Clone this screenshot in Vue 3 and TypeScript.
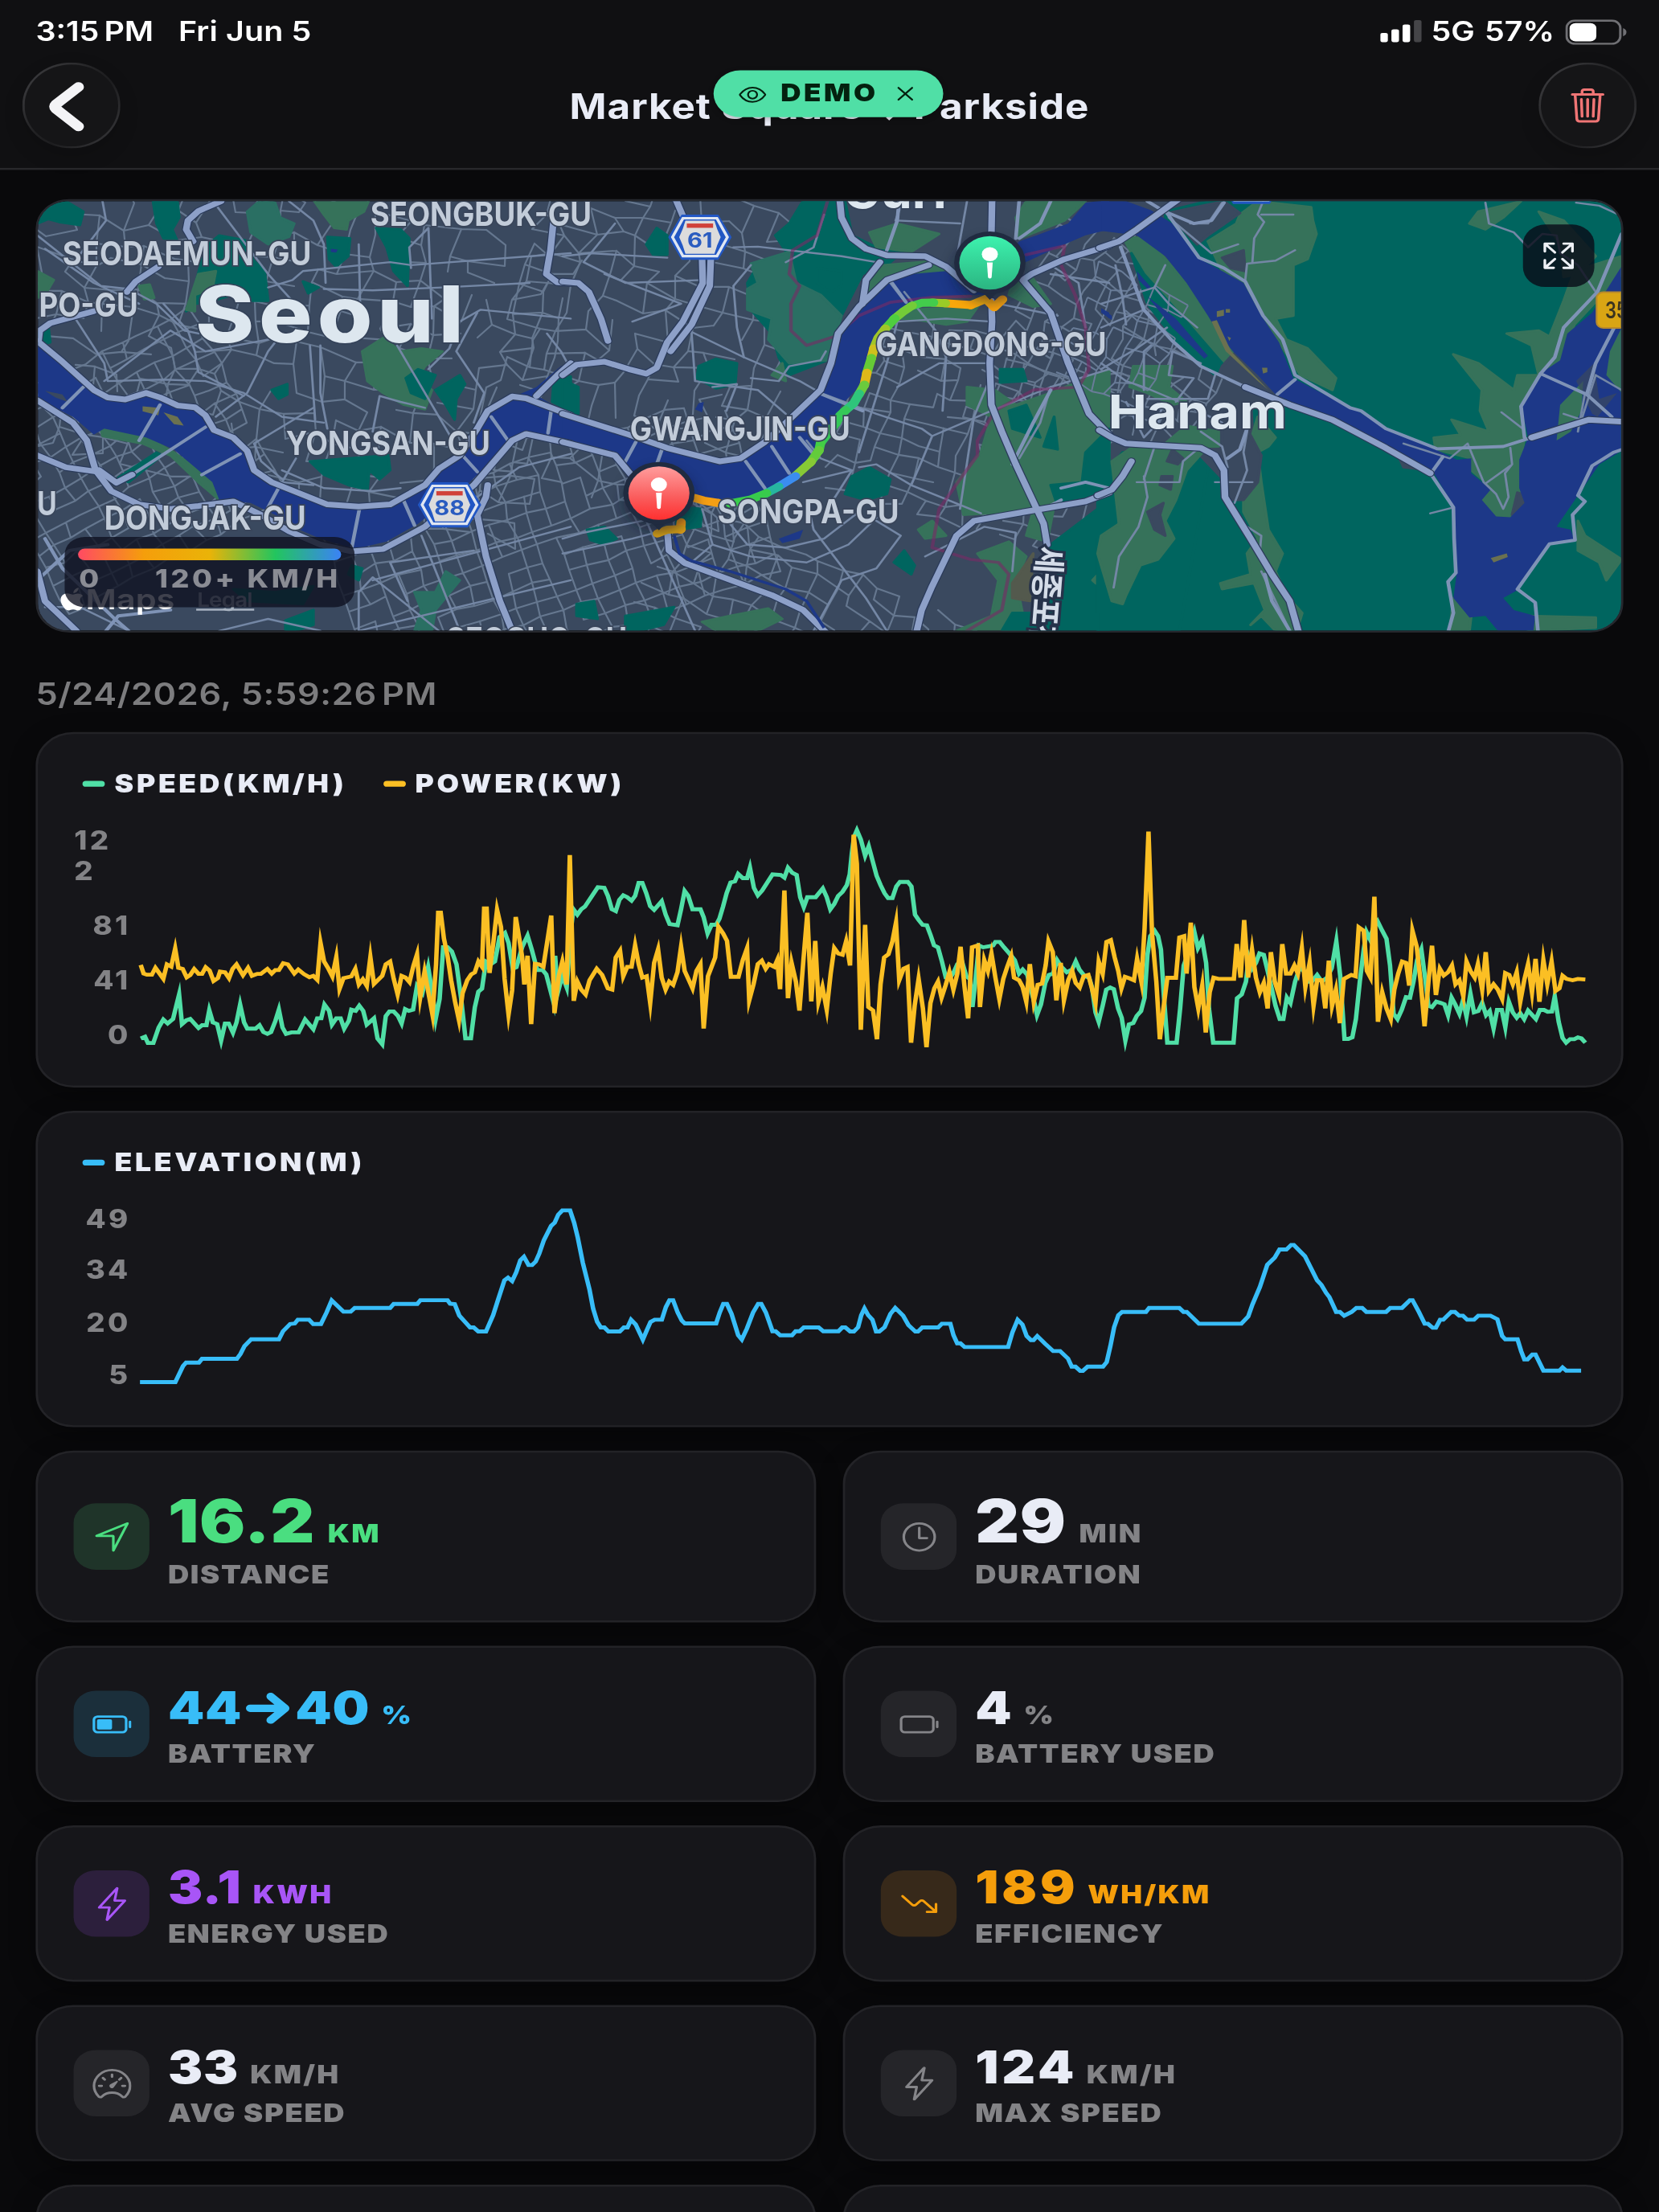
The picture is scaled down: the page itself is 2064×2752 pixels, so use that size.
<script setup lang="ts">
interface Chunk { x: number; y: number; kx: number; ky: number; pts: string }
interface Tile { m: string; land: [string, string][]; water: string[]; minor: string[]; mid: string[]; major: string[]; border: string[] }
interface Stat { icon: string; value: string; value2?: string; unit: string; label: string; tone: string; big?: boolean; ones?: boolean }

/* Horizontal and vertical pixels per layout point */
const SX = 2064 / 744
const SY = 2752 / 1133

const toPoints = (chunks: Chunk[]): string =>
  chunks
    .flatMap((c) =>
      c.pts.trim().split(/[\s;]+/).map((p) => {
        const [a, b] = p.split(',').map(Number)
        return `${((c.x + a / c.kx) / SX).toFixed(2)},${((c.y + b / c.ky) / SY).toFixed(2)}`
      }),
    )
    .join(' ')

const A = { x: 30, y: 820, kx: 2.24, ky: 2.8 }
const B = { x: 700, y: 900, kx: 2.24, ky: 3 }
const C = { x: 1370, y: 900, kx: 2.2594, ky: 3 }
const D = { x: 30, y: 1370, kx: 1.568, ky: 3 }
const E = { x: 1030, y: 1370, kx: 1.5164, ky: 3 }

const speed = toPoints([
  { ...A, pts: '325,1318;337,1312;345,1334;360,1334;375,1280;388,1252;400,1266;415,1250;424,1205;432,1165;440,1268;452,1255;463,1250;486,1282;496,1272;508,1272;516,1220;526,1262;538,1268;549,1325;560,1266;570,1266;582,1298;592,1262;602,1200;613,1262;622,1284;645,1284;656,1272;667,1296;678,1302;688,1296;700,1258;710,1218;720,1280;730,1302;745,1297;765,1297;783,1252;806,1286;817,1248;828,1248;837,1200;850,1222;858,1270;870,1248;882,1248;892,1284;905,1256;912,1218;924,1222;934,1204;945,1222;955,1270;975,1248;985,1318;998,1338;1008,1240;1018,1224;1030,1224;1042,1240;1052,1266;1062,1216;1072,1222;1084,1218;1095,1135;1110,1160;1126,1070;1140,1180;1147,1250;1158,1180;1168,1000;1180,1000;1192,1015;1205,1060;1218,1180;1230,1318;1245,1318;1256,1210;1266,1155;1276,1145;1287,1050;1300,1060;1312,1050;1325,965;1340,950;1350,985;1362,1075;1372,1070;1388,1000;1403,960;1415,1010;1430,1080;1445,1080;1455,1095;1475,1190;1480,1030;1487,1160;1500,1100;1512,1140;1523,950' },
  { ...B, pts: '30,690;41,710;52,690;62,680;98,608;116,610;126,640;137,690;148,697;158,655;169,638;180,645;192,658;202,640;212,592;222,592;233,630;244,678;255,692;276,660;287,710;298,745;320,750;330,690;340,622;350,640;362,690;384,690;393,720;404,780;415,748;428,748;437,725;447,680;457,630;468,590;480,586;489,558;502,574;514,574;522,535;533,610;544,638;556,620;585,560;608,562;618,572;628,535;640,554;652,562;662,645;672,682;682,645;705,645;725,612;736,645;746,690;757,670;768,640;780,625;792,600;800,560;806,480;812,420;820,395;831,430;843,490;853,455;864,510;875,565;886,600;897,630;907,648;919,648;930,605;940,588;962,588;972,605;982,710;992,730;1003,748;1015,750;1025,785;1035,825;1046,832;1057,885;1068,945;1078,950;1090,925;1100,895;1112,880;1125,940;1135,950;1142,1055;1150,960;1160,825;1172,832;1190,828;1200,825;1206,812;1218,812;1230,832;1245,855;1260,880;1272,930;1282,915;1295,935;1305,990;1315,1040;1322,1085;1333,1045;1345,965;1355,935;1367,930;1378,880;1390,905;1405,925;1420,915;1430,885;1440,915;1455,940;1467,945;1475,980;1485,1075;1494,1110;1505,1050;1515,990;1526,982;1536,988;1548,1060;1558,1095' },
  { ...C, pts: '68,1180;78,1120;90,1115;100,1088;112,1070;122,1020;130,860;138,790;150,770;160,790;168,840;176,1010;186,1188;212,1188;222,1060;232,900;240,870;252,820;262,775;272,835;284,805;295,890;303,1060;315,1188;372,1188;382,1022;395,1008;407,960;415,870;425,910;435,890;445,855;457,860;468,920;480,990;490,1050;502,1100;512,1100;522,1020;532,1040;545,960;555,920;565,905;580,960;592,960;607,935;620,960;635,945;648,910;661,810;672,940;684,1174;695,1174;706,1168;716,1100;727,960;738,840;746,775;755,800;765,760;777,735;790,770;802,800;812,900;822,1080;833,1100;845,1065;857,1018;868,1020;878,960;888,880;900,840;910,940;920,1050;930,1055;942,1035;955,1040;965,1045;975,1085;985,1020;995,1045;1007,1080;1017,1030;1027,1090;1038,1005;1048,1075;1060,1070;1071,1040;1082,1085;1092,1070;1103,1135;1113,1066;1126,1066;1136,1130;1146,1035;1157,1075;1168,1095;1178,1078;1189,1100;1200,1068;1222,1100;1233,1066;1245,1066;1255,1073;1267,1072;1275,1015;1286,1110;1297,1170;1307,1188;1318,1175;1330,1175;1340,1168;1350,1172;1361,1188' },
])

const power = toPoints([
  { ...A, pts: '325,1062;333,1092;342,1096;356,1096;366,1072;388,1110;398,1060;410,1068;421,1005;430,1072;442,1076;453,1105;463,1097;474,1076;486,1093;496,1093;506,1070;517,1082;528,1118;540,1108;546,1085;560,1088;571,1108;581,1076;592,1060;610,1098;624,1072;635,1100;650,1093;660,1093;678,1076;690,1092;700,1080;710,1080;722,1056;735,1060;753,1092;764,1078;780,1094;795,1105;806,1100;817,1114;826,985;836,1050;848,1075;859,1102;870,1035;879,1145;890,1108;912,1102;923,1076;933,1130;944,1112;955,1135;965,1035;975,1128;998,1100;1008,1060;1020,1050;1030,1110;1041,1165;1052,1100;1063,1106;1074,1122;1085,1065;1095,1025;1104,1175;1116,1085;1127,1160;1138,1235;1148,1060;1154,880;1161,880;1170,970;1180,1030;1190,1115;1201,1190;1212,1255;1222,1160;1235,1115;1246,1095;1256,1088;1266,1050;1276,1068;1282,865;1289,865;1297,1090;1308,980;1318,870;1329,930;1339,1110;1350,1235;1360,1150;1370,895;1380,970;1388,1035;1394,1130;1403,1030;1413,1268;1424,1058;1435,1060;1447,1068;1458,980;1469,890;1478,1230;1490,1100;1500,1050;1512,1130' },
  { ...B, pts: '20,488;31,1032;41,960;52,990;64,1008;75,955;95,912;110,935;126,985;138,990;148,870;160,845;169,940;180,905;192,905;202,825;212,895;222,945;234,940;244,1040;255,890;266,840;276,945;287,990;297,960;308,972;320,925;330,830;340,920;352,955;362,985;373,920;384,895;393,1135;405,940;415,905;425,870;434,755;447,780;458,808;469,942;490,942;502,880;514,835;520,1030;532,970;544,895;555,882;566,912;575,895;590,905;598,880;606,988;618,620;628,1022;638,890;650,960;660,1068;671,880;682,703;693,1034;704,808;713,1035;724,980;736,1065;747,930;757,835;768,855;780,860;790,810;801,900;811,412;820,520;831,1140;843,748;852,1055;865,1068;876,1175;886,970;896,870;908,858;919,810;929,740;938,955;950,912;961,905;971,1188;981,1050;992,950;1004,1060;1014,1205;1025,1040;1036,985;1046,960;1056,1020;1067,975;1078,925;1089,990;1100,930;1109,830;1120,980;1130,1097;1141,832;1157,825;1163,1055;1175,880;1185,920;1195,855;1206,945;1217,1025;1228,950;1239,905;1250,865;1258,945;1272,955;1282,980;1292,1035;1302,895;1313,1035;1324,972;1336,968;1346,900;1354,810;1366,850;1376,1030;1388,890;1397,1030;1409,955;1420,920;1430,965;1441,982;1452,940;1465,935;1474,980;1485,1040;1494,885;1505,930' },
  { ...C, pts: '15,812;27,805;38,870;48,920;57,985;67,942;80,948;92,955;101,875;113,960;122,760;133,400;143,780;155,960;165,1175;175,1060;186,946;210,946;220,795;233,790;240,930;252,740;262,980;273,1060;284,975;294,1150;305,1000;316,945;330,950;373,950;381,820;392,945;402,730;413,945;424,840;435,945;446,1000;457,965;468,1060;477,850;488,960;500,1010;509,820;520,930;532,930;543,900;553,930;564,835;574,980;586,890;597,1050;607,955;620,955;630,1060;640,882;649,1050;660,990;671,1115;682,950;703,935;715,940;724,757;738,770;747,920;757,945;768,643;778,1110;790,1000;802,1060;814,1100;824,990;835,930;846,885;857,890;866,975;875,770;887,830;898,960;909,1127;920,960;930,826;941,1010;952,912;963,937;975,925;986,900;996,970;1007,955;1018,1015;1027,885;1038,920;1050,945;1059,895;1071,990;1081,850;1090,995;1103,970;1115,990;1127,1025;1136,928;1147,935;1157,970;1168,925;1178,1035;1190,950;1200,895;1211,1000;1221,875;1232,1035;1243,880;1254,970;1266,885;1277,995;1288,985;1297,938;1308,950;1325,955;1340,950;1361,952' },
])

const elevation = toPoints([
  { ...D, pts: '226,1045;295,1045;310,985;316,972;341,972;347,958;415,958;422,940;430,910;443,885;497,885;505,855;519,828;528,826;534,812;556,812;564,828;579,828;590,785;600,740;612,762;623,782;637,782;645,768;714,768;721,753;767,753;773,739;826,739;831,752;840,754;849,797;860,820;870,841;877,841;886,856;901,856;915,795;925,735;937,665;944,655;952,668;960,635;968,590;975,577;984,608;991,608;998,595;1005,565;1014,515;1028,462;1035,450;1042,420;1050,404;1065,404;1073,450;1080,505;1090,600;1103,700;1110,770;1118,820;1125,841;1132,841;1140,856;1162,856;1170,841;1177,841;1184,812;1193,830;1207,886;1215,850;1222,820;1230,812;1244,812;1252,765;1259,739;1266,739;1275,785;1283,815;1289,826;1350,826;1357,785;1364,753;1371,753;1380,790;1393,870;1400,886;1410,845;1422,785;1432,753;1438,753;1447,785;1460,855;1466,855;1475,870;1498,870;1505,855;1513,855;1521,841;1550,841;1559,855' },
  { ...E, pts: '0,855;20,855;27,841;33,841;42,856;49,856;57,840;63,795;69,770;76,795;84,812;91,856;97,856;107,840;118,790;127,768;142,797;152,832;165,856;170,856;178,841;208,841;215,827;231,827;237,870;244,900;250,900;258,914;340,914;348,860;358,812;367,830;375,873;383,888;388,888;395,873;410,902;425,929;438,929;453,957;460,987;467,987;476,1003;481,1003;490,987;519,987;526,970;533,910;540,840;548,795;555,783;600,783;606,768;663,768;671,783;677,783;700,827;780,827;793,800;801,755;815,690;829,607;843,580;852,550;865,550;874,533;879,533;900,575;923,665;931,682;940,712;946,727;959,783;966,783;974,797;988,783;997,768;1008,768;1016,783;1053,783;1061,768;1083,768;1098,739;1103,739;1115,783;1126,827;1132,827;1141,842;1147,842;1155,812;1161,812;1176,783;1183,783;1191,797;1198,797;1206,812;1219,812;1227,797;1250,797;1263,810;1272,873;1278,885;1301,885;1308,930;1314,960;1320,960;1329,942;1335,942;1350,1002;1380,1002;1386,990;1393,1002;1421,1002' },
])

/* Street mesh: jittered grid nodes joined to their neighbours */
function mesh(x0: number, y0: number, cols: number, rows: number, step: number, angle: number, jitter: number, keep: number, seed: number): string {
  let s = seed
  const rnd = () => ((s = (s * 16807) % 2147483647) / 2147483647)
  const ca = Math.cos((angle * Math.PI) / 180)
  const sa = Math.sin((angle * Math.PI) / 180)
  const node: number[][][] = []
  for (let r = 0; r < rows; r++) {
    node.push([])
    for (let c = 0; c < cols; c++) {
      const u = c * step + (rnd() - 0.5) * jitter
      const v = r * step * 0.85 + (rnd() - 0.5) * jitter
      node[r].push([Math.round(x0 + u * ca - v * sa), Math.round(y0 + u * sa + v * ca)])
    }
  }
  let d = ''
  for (let r = 0; r < rows; r++)
    for (let c = 0; c < cols; c++) {
      const [x, y] = node[r][c]
      if (c + 1 < cols && rnd() < keep) d += `M${x} ${y}L${node[r][c + 1].join(' ')}`
      if (r + 1 < rows && rnd() < keep) d += `M${x} ${y}L${node[r + 1][c].join(' ')}`
    }
  return d
}

const streets = [
  mesh(20, 170, 24, 15, 31, 12, 17, 0.64, 11),
  mesh(-40, 530, 14, 14, 24, -28, 7, 0.85, 5),
  mesh(400, 660, 22, 12, 25, -19, 6, 0.86, 41),
  mesh(700, 190, 12, 16, 31, 17, 18, 0.66, 17),
  mesh(850, 620, 16, 12, 27, 24, 12, 0.78, 77),
  mesh(1090, 380, 14, 12, 25, 16, 10, 0.75, 31),
  mesh(1330, 250, 13, 17, 22, 26, 12, 0.72, 91),
]

const G = '#00655f'
const M = '#36725a'
const T = '#2a6f63'
const U = '#3a495f'

const tiles: Tile[] = [
  {
    m: 'matrix(.43367 0 0 .3699 30 230)',
    land: [
      [G, '38,130 60,80 120,55 170,90 160,135 100,125 70,115'],
      [G, '370,55 440,55 445,110 425,150 440,190 400,180 380,130'],
      [T, '640,90 680,50 720,60 735,110 775,130 760,175 700,200 650,160'],
      [M, '830,50 990,50 975,90 930,120 925,150 890,145 860,100'],
      [G, '1010,145 1080,150 1105,180 1100,340 1060,290 1040,210'],
      [G, '870,175 935,180 930,240 895,275 875,250'],
      [G, '520,210 560,170 650,190 655,250 690,290 700,390 640,390 600,370 540,390 490,400 465,425 490,340'],
      [M, '500,300 550,290 540,350 490,370 490,425 465,420 480,370'],
      [M, '38,290 85,320 60,370 38,380'],
      [M, '330,340 360,335 373,380 345,385'],
      [G, '800,325 845,345 815,365'],
      [M, '970,560 1030,515 1080,560 1140,550 1200,560 1150,610 1130,650 1170,690 1150,755 1090,740 1030,700 985,660'],
      [G, '1095,650 1130,620 1180,640 1150,720 1110,700'],
      [G, '1180,690 1250,640 1265,670 1240,720 1235,790 1210,740'],
      [G, '710,690 755,670 755,705 730,720'],
      [G, '820,930 1045,910 1050,960 1020,990 990,960 985,1025 930,1010 860,975'],
      [G, '1520,650 1568,645 1568,760 1515,730'],
      [M, '220,818 340,840 430,900 500,960 550,1010 555,1055 500,1000 420,910 340,870 225,845'],
      [G, '270,985 380,900 395,910 300,1000'],
      [G, '38,500 70,480 75,530 38,540'],
      [T, '1120,1370 1180,1370 1210,1300 1250,1330 1180,1430 1170,1500 1120,1500 1140,1430'],
      [G, '940,1280 970,1290 960,1330 930,1310'],
      [G, '750,1465 830,1430 830,1480 780,1500 750,1500'],
      [G, '600,1360 720,1370 830,1350 800,1410 640,1400'],
    ],
    water: [
      '38,530 110,590 200,690 290,725 360,700 440,740 500,750 540,820 600,850 650,900 670,970 740,1010 880,1085 1000,1090 1080,1065 1150,1010 1200,950 1290,840 1340,750 1410,710 1470,680 1540,610 1568,600 1568,615 1480,715 1568,775 1568,870 1440,835 1400,850 1330,940 1270,1010 1130,1140 1040,1200 950,1225 850,1190 790,1160 720,1110 650,1070 560,1060 540,1000 500,960 430,890 350,850 230,820 200,840 140,780 38,720',
      '880,215 900,218 895,228 880,226',
    ],
    minor: [
      '150,455 230,600 240,660 400,655 520,660 630,700 740,780 860,800', '400,400 470,490 490,560 500,630 630,710', '230,660 330,570 420,490 520,560 700,520',
      '300,350 380,400 460,490 500,500', '860,350 1000,355 1200,345 1450,330', '700,345 770,320 800,290 1050,260 1110,270 1568,230', '1110,280 1105,210 1160,145 1170,450',
      '820,540 835,790', '850,540 850,700 870,820', '550,780 640,700 700,560 720,530', '660,870 830,750', '1000,830 1020,710 1080,730 1150,750', '1160,620 1220,550 1250,460 1310,420 1568,450',
      '760,55 830,120 860,200 865,330', '555,75 700,300 800,430', '225,55 235,120 150,250', '60,215 200,330 330,400', '38,170 220,340 300,350', '960,200 965,450', '1070,540 1160,720 1230,860',
      '740,960 860,1020 1000,1030 1080,1020', '660,870 680,930 740,990', '780,920 740,1000 830,1010', '1300,430 1240,560 1320,700 1290,800', '1500,500 1540,560 1568,620',
      '960,1500 960,1370 1000,1320 1190,1500', '1000,1330 1568,1150', '960,1500 1568,1330', '1100,1400 1050,1270 1290,1230', '300,1500 160,1420 60,1420', '560,1500 700,1460 850,1500', '1300,1050 1420,950 1568,905', '1140,1180 1250,1500',
    ],
    mid: [
      '110,750 170,680', '330,860 390,740', '270,1005 520,815', '510,975 620,905', '700,1085 730,1020', '940,1220 962,1090', '1120,1145 1088,1060', '1300,965 1250,900', '1388,860 1340,780', '1503,835 1512,760',
      '38,1330 130,1230 240,1210', '60,1190 110,1290 260,1460 300,1500', '235,1500 270,1450 420,1430',
    ],
    major: [
      '38,525 110,595 200,690 240,715 290,722 350,700 390,715 440,742 490,748 520,775 545,825 600,850 640,895 660,960 710,1000 870,1075 960,1082 1050,1075 1150,1010 1190,955 1250,910 1300,820 1330,760 1400,712 1440,718 1568,775',
      '38,725 140,800 180,860 205,960 250,1030 330,1075 420,1090 500,1080 600,1065 680,1110 760,1165 850,1210 940,1233 1030,1225 1150,1150 1290,1010 1400,860 1440,838 1568,870',
      '38,910 120,950 210,965', '215,960 265,1002 310,975', '565,55 500,88 470,120 465,150 485,190', '385,275 320,325 295,360', '200,425 75,465 45,490 42,520',
      '1518,130 1510,220 1498,300 1530,328 1568,330', '1330,1010 1325,1050 1300,1110 1325,1250 1365,1400 1400,1500', '1568,600 1530,640 1470,710', '38,1300 60,1400 150,1500',
    ],
    border: [],
  },
  {
    m: 'matrix(.43367 0 0 .3699 700 230)',
    land: [
      [G, '690,53 810,53 830,170 900,210 960,150 1000,200 930,270 860,300 800,440 760,590 650,640 620,580 600,500 540,420 530,330 560,270 650,240 610,170 650,130'],
      [T, '540,265 650,225 670,330 740,370 800,440 760,590 650,600 590,520 600,450 530,420 530,350 560,330'],
      [G, '730,280 800,290 800,340 770,360 730,330'],
      [M, '880,160 960,130 1080,165 1000,225 900,210'],
      [M, '1330,55 1500,55 1440,120 1310,180 1300,110'],
      [M, '920,270 1080,255 1130,290 1000,300 900,350 850,420 870,330'],
      [M, '1000,420 1100,415 1200,395 1160,460 1100,470 1000,450 960,450'],
      [M, '1290,330 1340,300 1400,400 1350,410 1280,370'],
      [G, '240,200 270,145 300,170 300,235 260,235'],
      [G, '390,610 440,585 500,600 495,670 440,685 385,650'],
      [G, '0,655 45,680 45,770 0,755'],
      [G, '1255,620 1320,620 1330,660 1255,665'],
      [M, '600,640 630,600 640,660'],
      [M, '1160,680 1240,690 1300,740 1400,700 1568,620 1568,1040 1450,1060 1410,1080 1390,1200 1330,1180 1350,1095 1150,1110 1130,1000 1200,900 1230,780 1160,740'],
      [G, '1568,820 1500,900 1490,1000 1400,1010 1420,1080 1568,1040'],
      [G, '1280,760 1330,740 1370,850 1290,820'],
      [G, '1380,880 1410,780 1420,890'],
      [G, '830,980 880,950 940,990 930,1040 870,1060 810,1040'],
      [G, '320,1080 400,1090 395,1150 330,1160'],
      [G, '70,1160 120,1150 155,1190 120,1210 80,1195'],
      [G, '950,1270 980,1230 1010,1280 1000,1310'],
      [M, '1020,1160 1060,1130 1100,1180 1040,1190'],
      [M, '1190,1240 1280,1200 1330,1250 1300,1330 1330,1500 1130,1500 1230,1450 1250,1330'],
      [G, '1400,1210 1568,1060 1568,1500 1260,1500 1290,1440 1380,1440'],
      [M, '1520,1330 1568,1270 1568,1360 1530,1340'],
      ['#53594d', '1290,1340 1350,1240 1340,1400 1290,1390'],
      [M, '480,1450 590,1425 630,1460 560,1500 440,1500 400,1470'],
      [G, '180,1450 320,1420 290,1480 220,1500 180,1500'],
      [G, '40,1410 90,1400 100,1460 40,1450'],
    ],
    water: [
      '0,770 190,840 270,880 430,930 500,930 570,880 640,800 720,720 760,640 790,510 850,400 930,330 1000,300 1100,290 1180,350 1310,190 1360,170 1450,130 1500,60 1568,50 1568,150 1500,170 1420,210 1310,270 1230,370 1150,370 1040,380 980,410 920,470 880,560 850,680 800,740 780,800 740,880 700,950 620,1020 520,1060 430,1055 370,1040 200,970 160,910 0,860',
      '390,735 405,730 400,765 380,755', '620,1190 690,1160 680,1190 630,1205', '1545,415 1568,430 1568,450',
    ],
    minor: [
      '490,210 560,208 800,240 900,260', '370,495 520,580 680,660 740,700', '520,580 500,480 490,340 540,270', '370,500 380,660 560,690 640,770', '470,760 500,670 430,680', '0,240 80,230 300,245', '150,130 60,260 180,330 400,320', '200,460 340,400 120,300',
      '740,700 900,770 1030,820 1060,845 1030,930 1000,1010', '1060,845 1220,765 1400,680 1568,620', '850,950 900,940 1000,1010 1200,1105', '850,900 930,600 960,460 1100,450 1230,460', '1230,600 1080,600 960,680', '980,360 1070,490 1100,580 1090,760', '700,860 740,920 830,960 760,1090',
      '1140,1090 1180,780 1230,640', '540,650 620,660 650,610 740,590 755,560', '640,260 720,210 750,100', '940,330 980,390', '1330,300 1400,270 1480,330 1500,480', '1400,680 1370,800 1310,920',
      '1400,300 1568,330', '1250,400 1420,440', '1130,250 1160,55', '955,120 975,55', '960,120 1140,130', '330,1150 200,1190 0,1240', '240,1130 380,1500', '400,1090 430,1210 370,1270', '480,1140 530,1210 640,1220 750,1190 850,1100', '430,1210 540,1250 700,1270 820,1210 900,1120', '700,1060 720,1160 870,1390 930,1500', '900,1130 970,1180 900,1290 800,1330 720,1500', '0,1190 60,1170 230,1130', '690,1000 830,960', '1040,1250 1210,1150 1300,1170 1290,1300',
    ],
    mid: [
      '180,930 210,865', '270,940 285,890', '525,930 580,1020', '600,880 650,970', '680,850 730,920', '735,700 860,760', '945,330 985,395', '1290,940 1350,800 1400,690', '1310,50 1300,180', '930,220 960,120 965,55', '1310,180 1370,130 1400,55', '1430,1060 1380,1090', '1430,1020 1500,1000 1568,1020',
    ],
    major: [
      '325,50 345,105', '400,250 402,330 345,460 300,530 270,615 240,635 190,620 120,595 40,605 0,640', '425,250 422,340 370,470 310,560', '0,325 45,330 75,360 110,450 130,525',
      '0,770 190,840 300,885 450,930 510,920 580,865 650,790 740,690 770,600 790,500 850,410 930,320 1050,270',
      '795,50 800,110 830,180 870,215 930,237 1040,240 1100,275 1180,355', '860,400 870,320 910,260', '1232,50 1230,170', '1230,390 1232,460 1225,600 1230,740 1260,830 1300,940 1360,1090 1380,1140 1390,1210',
      '1568,205 1440,250 1345,300 1320,320 1400,430 1450,600 1510,770 1568,840', '1568,1035 1500,1065 1350,1095 1180,1130 1130,1180 1060,1350 1030,1430 1015,1505',
      '0,865 150,910 200,980 230,1080', '300,1160 305,1230 350,1272 600,1380 690,1430 755,1505',
    ],
    border: [
      '760,55 730,170 660,220 650,300 680,340 655,400 655,490 700,540 780,510 850,440 940,395 1060,378 1170,375', '1330,235 1440,205 1430,270 1470,370 1500,480 1510,620 1480,680 1350,690 1240,760 1190,860 1190,910 1140,990 1080,1090 1060,1220 1170,1260 1250,1270 1280,1310 1260,1430 1160,1500',
    ],
  },
  {
    m: 'matrix(.4426 0 0 .3699 1370 230)',
    land: [
      [G, '370,50 1470,50 1470,1510 -10,1510 -10,1190 60,900 260,900 340,1000 420,1020 440,960 430,760 560,700 400,500 180,230 180,90 280,60'],
      [G, '-10,1000 60,900 250,890 300,960 220,1500 -10,1500'],
      [M, '390,100 440,55 590,75 595,120 605,165 580,250 540,270 540,440 490,450 520,520 580,550 660,650 650,690 560,640 440,420 340,290 300,190 380,130'],
      [M, '60,175 130,180 240,330 300,430 370,560 340,610 260,520 150,350 100,260'],
      [G, '85,230 120,300 210,420 340,600 320,640 220,540 130,400'],
      [M, '90,610 200,610 190,680 240,730 200,740 130,700 80,680'],
      [M, '180,870 240,810 330,830 330,880 200,880'],
      [M, '30,930 90,880 200,880 300,880 240,960 210,1060 180,1130 205,1190 160,1260 110,1280 70,1380 60,1410 30,1400 -10,1240 0,1180 50,1140'],
      [M, '440,780 490,850 470,880 440,900 450,1000 470,1160 510,1240 490,1300 520,1380 565,1440 550,1500 490,1500 450,1450 420,1480 460,1430 430,1340 340,1360 335,1340 420,1310 410,1240 440,1190 400,1100 400,1000 420,860'],
      [M, '1035,130 1060,90 1180,55 1130,110 1080,150'],
      [M, '1230,90 1300,120 1390,240 1340,300 1300,310 1290,200'],
      [M, '990,570 1060,600 1160,690 1170,640 1230,640 1210,540 1140,500 1230,490 1260,510 1300,390 1330,290 1463,240 1463,300 1330,470 1290,600 1180,750 1190,850 1180,920 1175,1020 1190,1070 1150,1118 1110,1118 1070,1060 1100,1020 1040,960 1040,920 940,890 935,850 1010,840 985,790 1090,830 1065,760 1070,690'],
      [M, '1340,1130 1360,1180 1463,1260 1420,1330 1400,1270 1340,1230'],
      [M, '990,1390 1040,1450 1035,1500 980,1500'],
      [M, '1200,1450 1390,1455 1390,1490 1200,1500'],
      [U, '185,95 345,55 390,95 300,170 270,200'],
      [U, '340,245 400,220 405,290 365,280'],
      [U, '340,610 370,570 470,690 430,700 330,640'],
      [U, '200,890 230,920 215,940 185,930'], [U, '170,980 200,980 195,1025 165,1010'], [U, '130,1100 175,1070 165,1110 180,1180 150,1160'],
      [U, '835,910 920,960 850,950'], [U, '1170,1035 1200,1045 1180,1105 1155,1110'],
      [U, '340,820 410,820 450,910 440,1000 400,1060 355,1060 345,960'],
    ],
    water: [
      '0,50 70,55 140,85 200,130 270,245 340,290 400,330 450,440 500,530 540,650 620,700 720,760 800,820 940,890 1000,925 1040,920 1040,970 1095,1025 1070,1060 1110,1115 1150,1118 1190,1070 1175,1020 1175,925 1200,850 1180,740 1240,630 1290,590 1310,500 1380,430 1470,260 1470,890 1400,940 1360,1010 1280,1150 1320,1160 1330,1195 1260,1210 1175,1360 1130,1390 1160,1430 1220,1450 1215,1500 1115,1500 1080,1450 1035,1455 990,1390 1000,1300 990,1080 930,960 800,890 640,790 490,705 440,640 370,560 330,500 300,440 240,330 180,240 100,170 0,155',
      '130,375 210,450 300,575 290,585 200,480', '100,290 140,345 130,350 105,320', '0,415 30,440 30,455 0,430',
    ],
    minor: [
      '455,55 440,100 458,125 430,180 425,260', '405,320 410,265 490,255 545,220', '180,270 150,345 190,400 270,480', '0,400 150,345', '40,270 60,380 70,470', '120,420 0,480', '185,480 100,550 0,620', '0,600 70,660 120,680 220,730 340,800', '120,690 120,560 140,540',
      '320,640 300,720 130,720', '280,600 200,560 190,640 260,650 210,730', '70,730 120,850 160,800 170,750', '280,830 340,880 355,950', '100,1000 220,1000 230,930 270,890', '120,980 130,1050 105,1150 50,1250 35,1355', '320,1000 425,1000', '410,830 400,900 410,960 375,1070',
      '1080,60 1090,130 1160,160 1200,210 1240,165 1280,170 1290,230 1340,270 1390,360', '1335,60 1400,70 1463,105', '1125,765 1185,820', '925,1105 990,1085', '1150,885 1155,940 1135,970 1145,1050 1130,1090 1110,1040 1075,1000 1030,870 980,920 850,870', '1080,1005 1150,945', '1300,770 1350,790 1390,640', '1340,830 1360,700', '450,1300 490,1400 530,1500', '410,1150 450,1180 445,1250', '150,880 120,990', '190,110 310,230 385,200', '250,130 300,130 340,60', '450,100 540,100', '1390,640 1463,690',
    ],
    mid: [
      '130,55 185,95 275,245 345,280 405,325 455,440 510,520 545,640 700,750 730,760 800,820 945,888 1130,880 1210,850', '925,970 990,1085 992,1190 997,1305 975,1335 990,1440 975,1505', '55,210 120,420 200,525 280,610 405,680', '1463,165 1395,360 1300,480 1275,580 1235,635 1180,745 1190,850',
      '1470,888 1440,900 1380,945 1340,1045 1360,1065 1325,1110 1332,1195 1260,1208 1170,1360 1220,1405 1228,1505', '1235,635 1365,705 1435,780', '1442,480 1390,600 1365,705', '930,965 960,915', '495,705 545,655', '410,820 390,890 355,920', '460,1310 480,1400 530,1500', '190,95 260,130 310,120 345,60',
    ],
    major: [
      '-5,212 50,190 100,150 215,50', '-5,825 30,850 70,870 180,878 280,885 320,910 345,960 348,1050 420,1190 480,1310 530,1400 555,1505', '405,680 530,740 650,790 800,885 925,970', '1210,850 1370,790 1470,797', '-10,1045 30,1025 60,980 85,930',
    ],
    border: [],
  },
]

const route: [string, string][] = [
  ['#f5a00f', '1262,385 1238,412 1215,385'], ['#f3a90e', '1215,383 1170,405'], ['#f8a70c', '1172,404 1095,398'], ['#9acb27', '1098,398 1060,396'], ['#43cc4c', '1064,396 1030,397 1000,408'], ['#74cb38', '1003,406 975,428 950,452'], ['#4fce3f', '953,449 925,485'],
  ['#a0c629', '926,483 905,515 892,552'], ['#cfc01d', '893,550 885,585'], ['#66cb36', '886,582 872,635'], ['#e0b81a', '873,632 865,675'], ['#6bcb3d', '866,672 850,705'], ['#2fc57b', '851,702 835,735 808,762'], ['#35c858', '812,758 796,775 785,800'], ['#35c858', '785,800 740,868'],
  ['#43cf45', '740,868 735,895'], ['#63cc3b', '736,892 710,935'], ['#87ca35', '713,931 665,982'], ['#3b8df0', '668,980 618,1016'], ['#27b5a0', '620,1015 580,1040'], ['#38cc4c', '585,1037 540,1058 480,1072'], ['#f59f14', '446,1070 405,1062 378,1053'],
  ['#f39a12', '340,1135 338,1160'], ['#dca015', '340,1158 300,1160 272,1173'],
]

const labels: [string, number, number, number][] = [
  ['SEODAEMUN-GU', 28, 135.9, 111.6], ['SEONGBUK-GU', 166.1, 115.5, 99.2], ['PO-GU', 17.5, 162.2, 44.4], ['YONGSAN-GU', 128.2, 233, 91.6], ['DONGJAK-GU', 46.8, 271.4, 90.4], ['U', 16.7, 263.8, 8.8],
  ['SEOCHO-GU', 200.2, 333.6, 81], ['GWANGJIN-GU', 282.5, 225.8, 98.8], ['GANGDONG-GU', 392.7, 182.5, 103.5], ['SONGPA-GU', 321.8, 268.1, 81.4],
]
const shields = [{ x: 313.9, y: 121.5, n: '61' }, { x: 201.6, y: 258.6, n: '88' }, { x: 561.2, y: 92.9, n: '47' }]
const pins = [{ x: 443.9, y: 134.6, id: 'pinStart' }, { x: 295.5, y: 252.6, id: 'pinEnd' }]

const stats: Stat[] = [
  { icon: 'navigate', value: '16.2', unit: 'KM', label: 'DISTANCE', tone: 'green', big: true },
  { icon: 'time', value: '29', unit: 'MIN', label: 'DURATION', tone: 'plain', big: true },
  { icon: 'half', value: '44', value2: '40', unit: '%', label: 'BATTERY', tone: 'blue' },
  { icon: 'empty', value: '4', unit: '%', label: 'BATTERY USED', tone: 'plain' },
  { icon: 'flash', value: '3.1', unit: 'KWH', label: 'ENERGY USED', tone: 'purple' },
  { icon: 'down', value: '189', unit: 'WH/KM', label: 'EFFICIENCY', tone: 'orange', ones: true },
  { icon: 'gauge', value: '33', unit: 'KM/H', label: 'AVG SPEED', tone: 'plain' },
  { icon: 'flash', value: '124', unit: 'KM/H', label: 'MAX SPEED', tone: 'plain', ones: true },
]

const iconPaths: Record<string, string> = {
  navigate: 'M448 64L64 240.14h200a8 8 0 018 8V448z',
  time: 'M256 64C150 64 64 150 64 256s86 192 192 192 192-86 192-192S362 64 256 64zM256 128v144h96',
  half: 'M76.7 144h308.6a45.7 45.7 0 0145.7 45.7v132.6a45.7 45.7 0 01-45.7 45.7H76.7A45.7 45.7 0 0131 322.3V189.7A45.7 45.7 0 0176.7 144zM479 218.67v74.66',
  empty: 'M76.7 144h308.6a45.7 45.7 0 0145.7 45.7v132.6a45.7 45.7 0 01-45.7 45.7H76.7A45.7 45.7 0 0131 322.3V189.7A45.7 45.7 0 0176.7 144zM479 218.67v74.66',
  flash: 'M315.27 33L96 304h128l-31.51 173.23a2.36 2.36 0 002.33 2.77h0a2.36 2.36 0 001.89-.95L416 208H288l31.66-173.25a2.45 2.45 0 00-2.44-2.75h0a2.42 2.42 0 00-1.95 1z',
  down: 'M352 368h112V256M48 144l121.37 121.37a32 32 0 0045.26 0l50.74-50.74a32 32 0 0145.26 0L448 352',
  gauge: 'M256 64C132.3 64 32 164.2 32 287.9a223.18 223.18 0 0056.3 148.5c1.1 1.2 2.1 2.4 3.2 3.5a25.19 25.19 0 0037.1-.1 173.13 173.13 0 01254.8 0 25.19 25.19 0 0037.1.1l3.2-3.5A223.18 223.18 0 00480 287.9C480 164.2 379.7 64 256 64zM256 128v32M416 288h-32M128 288H96M165.49 197.49l-22.63-22.63M346.51 197.49l22.63-22.63',
}
const iconSolids: Record<string, string> = {
  half: 'M89.7 198.9h146.3a4 4 0 014 4v106.2a4 4 0 01-4 4H89.7a4 4 0 01-4-4V202.9a4 4 0 014-4z',
  gauge: 'M326.1 231.9l-47.5 75.5a31 31 0 01-7 7 30.11 30.11 0 01-35-49l75.5-47.5a10.23 10.23 0 0111.7 0 10.06 10.06 0 012.3 14z',
}
</script>

<template>
  <div class="viewport">
    <div class="screen">
      <header class="header">
        <div class="status">
          <span class="clock">3:15<i class="thin"></i>PM</span>
          <span class="day">Fri Jun 5</span>
          <span class="fill"></span>
          <svg class="bars" viewBox="0 0 19 12">
            <rect x="0" y="6.9" width="3.4" height="4.7" rx="1" fill="#fff" />
            <rect x="5" y="5" width="3.4" height="6.6" rx="1" fill="#fff" />
            <rect x="10" y="2.6" width="3.4" height="9" rx="1" fill="#fff" />
            <rect x="15.1" y=".3" width="3.4" height="11.3" rx="1" fill="#454548" />
          </svg>
          <span class="net">5G</span>
          <span class="pct">57%</span>
          <svg class="cell" viewBox="0 0 28 13">
            <rect x=".55" y=".55" width="24.1" height="11.9" rx="3.8" fill="none" stroke="#707074" stroke-width="1.1" />
            <rect x="1.9" y="1.8" width="12" height="9.4" rx="2.7" fill="#fff" />
            <path d="M25.9 4.4c1.1.5 1.5 1.2 1.5 2.1s-.4 1.6-1.5 2.1z" fill="#707074" />
          </svg>
        </div>
        <div class="nav">
          <button class="round">
            <svg viewBox="0 0 44 44"><path d="M24.2 11.5L14 20.500q-1 1.100 0 2.200L24.200 31.800" fill="none" stroke="#f3f3f6" stroke-width="4.9" stroke-linecap="round" stroke-linejoin="round" /></svg>
          </button>
          <h1 class="title">Market Square <span class="to">→</span> Parkside</h1>
          <button class="round">
            <svg class="trash" viewBox="0 0 512 512" fill="none" stroke="#f07575" stroke-width="32" stroke-linecap="round" stroke-linejoin="round">
              <path d="M112 112l20 320c.95 18.49 14.4 32 32 32h184c17.67 0 30.87-13.51 32-32l20-320M80 112h352M192 112V72h0a23.93 23.93 0 0124-24h80a23.93 23.93 0 0124 24h0v40M256 176v224M184 176l8 224M328 176l-8 224" />
            </svg>
          </button>
        </div>
        <div class="demo">
          <svg width="13" height="13" viewBox="0 0 512 512" fill="none" stroke="currentColor" stroke-width="32" stroke-linejoin="round">
            <path d="M255.66 112c-77.94 0-157.89 45.11-220.83 135.33a16 16 0 00-.27 17.77C82.92 340.8 161.8 400 255.66 400c92.84 0 173.34-59.38 221.79-135.25a16.14 16.14 0 000-17.47C428.89 172.28 347.8 112 255.66 112z" />
            <circle cx="256" cy="256" r="80" />
          </svg>
          <b>DEMO</b>
          <svg width="14" height="14" viewBox="0 0 512 512" fill="none" stroke="currentColor" stroke-width="32" stroke-linecap="round"><path d="M368 368L144 144M368 144L144 368" /></svg>
        </div>
      </header>

      <main class="content">
        <section class="map">
          <svg class="canvas" viewBox="47.2 250.2 1969.6 533.2" preserveAspectRatio="none">
            <defs>
              <linearGradient id="pinStart" x1="0" y1="0" x2="0" y2="1"><stop offset="0" stop-color="#3df2ae" /><stop offset="1" stop-color="#2bb581" /></linearGradient>
              <linearGradient id="pinEnd" x1="0" y1="0" x2="0" y2="1"><stop offset="0" stop-color="#ff9d9d" /><stop offset=".6" stop-color="#fa5a5a" /><stop offset="1" stop-color="#ff3030" /></linearGradient>
              <filter id="soft" x="-60%" y="-60%" width="220%" height="220%"><feGaussianBlur stdDeviation="3" /></filter>
            </defs>
            <rect x="40" y="240" width="2000" height="560" :fill="U" />
            <path v-for="(d, i) in streets" :key="'s' + i" :d="d" fill="none" stroke="#65778f" stroke-width="2.2" stroke-linecap="round" />
            <g v-for="t in tiles" :key="'l' + t.m" :transform="t.m">
              <polygon v-for="(p, i) in t.land" :key="i" :points="p[1]" :fill="p[0]" :stroke="p[0]" stroke-width="8" stroke-linejoin="round" />
            </g>
            <path :d="mesh(1370, 330, 6, 8, 24, 24, 10, .72, 9)" fill="none" stroke="#697c98" stroke-width="2" />
            <g v-for="t in tiles" :key="'w' + t.m" :transform="t.m">
              <polygon v-for="(p, i) in t.water" :key="i" :points="p" fill="#1d3888" />
            </g>
            <g transform="matrix(.43367 0 0 .3699 30 230)" fill="#6b7150">
              <path d="M340 745L390 750 385 775 340 762zM400 765L440 780 458 810 430 805z" /><path d="M60 693L110 705 125 730 90 715z" fill="#3a495f" />
            </g>
            <g transform="matrix(.4426 0 0 .3699 1370 230)" fill="#6b7150">
              <path d="M325 425l20-5 0 20-20 5zM350 418h12v12h-12zM452 615l15 0 0 15-12 5zM1095 1255l45-15 3 12-40 18zM355 510l10 5-5 10z" /><path d="M310 460L325 455 365 560 470 690 440 660 350 560z" />
              <path d="M1290 740L1355 660 1350 760 1320 830 1280 860z" fill="#36725a" /><path d="M1430 560L1463 480V700L1420 640z" fill="#36725a" /><path d="M1385 600l15 120 50-20-55 80-15-10-45-110z" fill="#3a495f" opacity=".7" />
            </g>
            <g v-for="t in tiles" :key="'r' + t.m" :transform="t.m" fill="none" stroke-linecap="round" stroke-linejoin="round">
              <polyline v-for="(p, i) in t.minor" :key="'a' + i" :points="p" stroke="#7487a5" stroke-width="6.5" />
              <polyline v-for="(p, i) in t.border" :key="'b' + i" :points="p" stroke="#7a2a66" stroke-opacity=".6" stroke-width="10" />
              <polyline v-for="(p, i) in t.mid" :key="'c' + i" :points="p" stroke="#7f93b6" stroke-width="10.5" />
              <polyline v-for="(p, i) in t.major" :key="'d' + i" :points="p" stroke="#2a3a5a" stroke-width="25" />
              <polyline v-for="(p, i) in t.major" :key="'e' + i" :points="p" stroke="#8da0c8" stroke-width="19" />
            </g>
            <g transform="matrix(.43367 0 0 .3699 700 230)" fill="none" stroke-width="27" stroke-linejoin="round">
              <polyline points="320,1180 335,1240 370,1265 480,1300 640,1360 700,1400 750,1490" stroke="#1d3888" stroke-width="9" />
              <polyline v-for="(r, i) in route" :key="i" :points="r[1]" :stroke="r[0]" stroke-linecap="round" />
            </g>
            <g transform="scale(2.774194 2.42895)" class="labels">
              <text v-for="l in labels" :key="l[0]" :x="l[1]" :y="l[2]" :textLength="l[3]" lengthAdjust="spacingAndGlyphs" class="district">{{ l[0] }}</text>
              <text x="87.6" y="175.4" font-size="40" font-weight="800" textLength="120.4" class="city">Seoul</text>
              <text x="497" y="219.6" font-size="24" font-weight="700" textLength="80" lengthAdjust="spacingAndGlyphs" class="city">Hanam</text>
              <text x="378" y="106.6" font-size="24" font-weight="700" textLength="46.5" lengthAdjust="spacingAndGlyphs" class="city">Guri</text>
              <text transform="translate(465.5 279.6) rotate(94)" class="korean" textLength="54">세종포천</text>
              <g v-for="s in shields" :key="s.n" :transform="`translate(${s.x} ${s.y})`">
                <path d="M-8-11.2H8L13.8 0 8 11.2H-8L-13.8 0z" fill="#2257c4" stroke="#2257c4" stroke-width=".8" stroke-linejoin="round" />
                <path d="M-7.6-9.7H7.6L12.3 0 7.6 9.7H-7.6L-12.3 0z" fill="none" stroke="#dfe6f2" stroke-width="1.3" />
                <path d="M-6.5-8.5H6.5Q7.6-4 9.3 0 7.6 4 6.5 8.5H-6.5Q-7.6 4-9.3 0-7.6-4-6.5-8.5z" fill="#dcdcdc" />
                <rect x="-5.9" y="-7" width="11.8" height="2.2" fill="#d0413a" />
                <text y="5.2" text-anchor="middle" font-size="10.5" font-weight="700" fill="#2a5cc0">{{ s.n }}</text>
              </g>
              <g>
                <rect x="716" y="149.7" width="24" height="18.3" rx="3" fill="#d9a514" stroke="#b98a2c" stroke-width=".8" />
                <text x="719.8" y="163.2" font-size="11.5" font-weight="600" textLength="10" lengthAdjust="spacingAndGlyphs" fill="#3a3320">35</text>
              </g>
              <g v-for="p in pins" :key="p.id" :transform="`translate(${p.x} ${p.y})`">
                <circle cy="4" r="16" fill="#10182a" opacity=".55" filter="url(#soft)" />
                <path d="M-5 13L0 19 5 13z" fill="#202b40" />
                <circle r="16" fill="#202b40" />
                <circle r="13.7" :fill="`url(#${p.id})`" />
                <circle cy="-4.4" r="3.6" fill="#fff" />
                <path d="M-1.3-.2H1.3L.8 7.6Q0 8.6-.8 7.6z" fill="#fff" />
              </g>
              <g fill="#fff">
                <path d="M35.5 304.8c.1-1.4 1-2.4 2.3-2.7.1 1.4-1 2.7-2.3 2.7zM35.3 305.6c.7 0 1.3-.5 2.3-.5.8 0 1.6.4 2.2 1.1-1.9 1.1-1.6 3.8.3 4.6-.5 1.3-1.5 2.9-2.6 2.9-.8 0-1.1-.5-2.1-.5s-1.3.5-2 .5c-1.9 0-3.6-3.7-3.6-5.4 0-2.2 1.5-3.3 2.9-3.3 1.1 0 1.9.6 2.6.6z" transform="translate(-2.6 -1)" />
                <text x="38.4" y="312.3" font-size="14.3" font-weight="600" textLength="40" lengthAdjust="spacingAndGlyphs">Maps</text>
                <text x="88.4" y="311" font-size="10" font-weight="600" textLength="25" fill="#a9b4c2">Legal</text>
                <rect x="88" y="311.8" width="26" height="1" fill="#a9b4c2" />
              </g>
            </g>
          </svg>
          <div class="scale">
            <div class="ramp"></div>
            <div class="range"><span>0</span><span>120+ KM/H</span></div>
          </div>
          <button class="expand">
            <svg width="18" height="18" viewBox="0 0 512 512" fill="none" stroke="#eef1f6" stroke-width="34" stroke-linecap="round" stroke-linejoin="round">
              <path d="M432 320v112H320M421.8 421.77L304 304M80 192V80h112M90.2 90.23L208 208M320 80h112v112M421.77 90.2L304 208M192 432H80V320M90.23 421.8L208 304" />
            </svg>
          </button>
        </section>

        <p class="date">5/24/2026, 5:59:26<i class="thin"></i>PM</p>

        <section class="card chart">
          <div class="legend">
            <span class="key"><i class="dash speed"></i>SPEED(KM/H)</span>
            <span class="key"><i class="dash power"></i>POWER(KW)</span>
          </div>
          <div class="plot tall">
            <div class="axis"><span class="wrap">12<br />2</span><span>81</span><span>41</span><span>0</span></div>
            <svg viewBox="63 419.5 648 120" fill="none" stroke-width="2" stroke-miterlimit="10">
              <polyline :points="speed" stroke="#50dfa6" />
              <polyline :points="power" stroke="#fbbf24" />
            </svg>
          </div>
        </section>

        <section class="card chart">
          <div class="legend"><span class="key"><i class="dash height"></i>ELEVATION(M)</span></div>
          <div class="plot">
            <div class="axis"><span>49</span><span>34</span><span>20</span><span>5</span></div>
            <svg viewBox="63 613.5 648 100" fill="none" stroke-width="2" stroke-miterlimit="10">
              <polyline :points="elevation" stroke="#38bdf8" />
            </svg>
          </div>
        </section>

        <section class="grid">
          <article v-for="s in stats" :key="s.label" class="card stat" :class="[s.tone, { big: s.big, ones: s.ones }]">
            <div class="tile">
              <svg width="18.5" height="18.5" viewBox="0 0 512 512" fill="none" stroke="currentColor" stroke-width="32" stroke-linecap="round" stroke-linejoin="round">
                <path :d="iconPaths[s.icon]" />
                <path v-if="iconSolids[s.icon]" :d="iconSolids[s.icon]" fill="currentColor" :stroke-width="s.icon === 'half' ? 32 : 0" />
              </svg>
            </div>
            <div class="text">
              <div class="line">
                <span class="value">{{ s.value }}<svg v-if="s.value2" class="arrow" viewBox="0 0 20 16" fill="none" stroke="currentColor" stroke-width="3.8" stroke-linecap="round" stroke-linejoin="round"><path d="M2.2 8H17.3M11.4 1.9L17.9 8l-6.500 6.100" /></svg>{{ s.value2 }}</span>
                <span class="unit">{{ s.unit }}</span>
              </div>
              <div class="name">{{ s.label }}</div>
            </div>
          </article>
          <article class="card stat"></article>
          <article class="card stat"></article>
        </section>
      </main>
    </div>
  </div>
</template>

<style>
body { background: #09090b; }
</style>

<style scoped>
.viewport { width: 2064px; height: 2752px; overflow: hidden; background: #09090b; }
.screen {
  width: 744px; height: 1133px; overflow: hidden; transform: scale(2.774194, 2.42895); transform-origin: 0 0;
  font-family: Inter, "Noto Sans CJK KR", sans-serif; color: #e9ecf6; background: #09090b;
}
button { padding: 0; margin: 0; font: inherit; color: inherit; }
.thin { display: inline-block; width: 2.2px; }

.header { position: relative; box-sizing: border-box; height: 86.7px; background: #101012; border-bottom: 1px solid #28282b; }
.status { box-sizing: border-box; height: 32px; padding: 0 15px 0 16px; display: flex; align-items: center; color: #fff; font-size: 14.2px; font-weight: 600; line-height: 32px; }
.clock { width: 64px; letter-spacing: 0; }
.day { letter-spacing: .05px; }
.fill { flex: 1; }
.bars { width: 19px; height: 12px; margin-right: 3.8px; }
.net { width: 24px; letter-spacing: 0; }
.pct { width: 36px; letter-spacing: 0; }
.cell { width: 28px; height: 13px; margin-right: -.8px; }
.nav { display: flex; align-items: center; justify-content: space-between; padding: 0 10px; height: 44px; }
.round {
  width: 44px; height: 44px; border-radius: 50%; border: 1px solid transparent; display: grid; place-items: center; box-sizing: border-box;
  background: linear-gradient(#151517, #151517) padding-box, linear-gradient(130deg, #3e3e41 5%, #212123 45%, #1d1d1f 60%, #3a3a3d 98%) border-box;
  box-shadow: 0 4px 10px rgba(0, 0, 0, .14);
}
.round svg { width: 44px; height: 44px; }
.round svg.trash { width: 20px; height: 20px; }
.title { margin: 0; padding-top: 1px; font-size: 17.8px; line-height: 24px; font-weight: 700; letter-spacing: .35px; white-space: nowrap; }
.to { margin: 0 -2px; }
.demo {
  position: absolute; left: 320.3px; top: 36px; width: 103.2px; height: 24px; box-sizing: border-box; padding: 0 10.8px 0 11px; border-radius: 12px;
  background: #50dfa6; color: #04210f; display: flex; align-items: center; justify-content: space-between; box-shadow: 0 1px 3px rgba(0, 0, 0, .25);
}
.demo b { font-size: 12.6px; line-height: 16px; font-weight: 900; letter-spacing: 1.3px; margin: -.6px -1px 0 0; }

.content { padding: 15.5px 16px 0; }
.map { position: relative; height: 221.5px; box-sizing: border-box; border: 1px solid #26282e; border-radius: 15px; overflow: hidden; }
.canvas { display: block; width: 100%; height: 100%; }
.labels text { font-family: Inter, "Noto Sans CJK KR", sans-serif; }
.district { font-size: 16.8px; font-weight: 700; fill: #c2ccd9; stroke: #39455a; stroke-width: 1.5px; paint-order: stroke; }
.city { fill: #dde7ef; stroke: #35435a; stroke-width: 1.4px; paint-order: stroke; }
.korean { font-size: 15px; font-weight: 700; fill: #d4dce8; stroke: #26324a; stroke-width: 2.5px; paint-order: stroke; }
.scale { position: absolute; left: 12px; bottom: 12px; width: 130px; height: 35.7px; box-sizing: border-box; padding: 5.7px 6px 0; border-radius: 9px; background: rgba(15, 17, 32, .8); }
.ramp { height: 6.5px; border-radius: 4px; background: linear-gradient(90deg, #ff4a63, #f59e0b 25%, #eab308 50%, #22c55e 75%, #3b82f6); }
.range { display: flex; justify-content: space-between; margin-top: 1px; padding: 0 .2px 0 .4px; font-size: 13px; line-height: 16px; font-weight: 800; letter-spacing: 1.3px; color: #8a8c94; }
.expand { position: absolute; top: 12px; right: 12px; width: 32px; height: 32px; border: 0; border-radius: 10px; background: rgba(9, 10, 22, .8); display: grid; place-items: center; }

.date { margin: 22.3px 0 8.2px; height: 20.5px; font-size: 15.6px; line-height: 20.5px; font-weight: 600; letter-spacing: .25px; color: #7c7c7e; }

.card { box-sizing: border-box; background: #16161a; border: 1px solid #232327; border-radius: 17px; box-shadow: 0 4px 12px rgba(0, 0, 0, .35); }
.chart { padding: 16px; margin-bottom: 12px; }
.legend { height: 20px; padding-left: 4px; display: flex; align-items: center; gap: 16.3px; margin-bottom: 8px; }
.key { display: flex; align-items: center; gap: 4.4px; font-size: 12.8px; font-weight: 900; letter-spacing: 1.33px; line-height: 20px; color: #e9ecf6; }
.dash { width: 10px; height: 3px; border-radius: 1.5px; margin-top: -.6px; }
.dash.speed { background: #50dfa6; }
.dash.power { background: #fbbf24; }
.dash.height { background: #38bdf8; }
.plot { display: flex; gap: 4.4px; height: 100px; }
.plot.tall { height: 120px; }
.plot svg { width: 648px; height: 100%; overflow: visible; }
.axis { width: 25.6px; padding: 2px 0; display: flex; flex-direction: column; justify-content: space-between; text-align: right; font-size: 13.2px; line-height: 16px; font-weight: 800; letter-spacing: 1.2px; color: #838386; }
.axis .wrap { text-align: left; padding-left: .3px; }

.grid { display: grid; grid-template-columns: 1fr 1fr; gap: 12px; }
.stat { height: 80px; padding: 0 16px; display: flex; align-items: center; gap: 8.3px; }
.stat.big { height: 88.3px; }
.tile { width: 34px; height: 34px; flex: none; border-radius: 10px; display: grid; place-items: center; background: #252529; color: #858589; }
.line { display: flex; align-items: baseline; height: 30px; line-height: 30px; gap: 5.1px; }
.big .line { height: 38.5px; line-height: 38.5px; gap: 5.6px; }
.value { font-size: 23.3px; font-weight: 900; letter-spacing: .3px; }
.ones .value { letter-spacing: 1.4px; margin-right: -.9px; }
.big .value { font-size: 30.6px; letter-spacing: .3px; }
.arrow { width: 20px; height: 16px; margin: 0 2px 0 1.8px; }
.unit { font-size: 12.9px; font-weight: 900; letter-spacing: .85px; color: #838386; }
.name { font-size: 13.1px; line-height: 16px; font-weight: 900; letter-spacing: .6px; color: #838386; }
.green .value, .green .unit, .green .tile { color: #4ade80; }
.green .tile { background: #1f3429; }
.blue .value, .blue .unit, .blue .tile { color: #38bdf8; }
.blue .tile { background: #1b2f3b; }
.purple .value, .purple .unit, .purple .tile { color: #a855f7; }
.purple .tile { background: #2c1f3c; }
.orange .value, .orange .unit, .orange .tile { color: #f59e0b; }
.orange .tile { background: #37291a; }
</style>
